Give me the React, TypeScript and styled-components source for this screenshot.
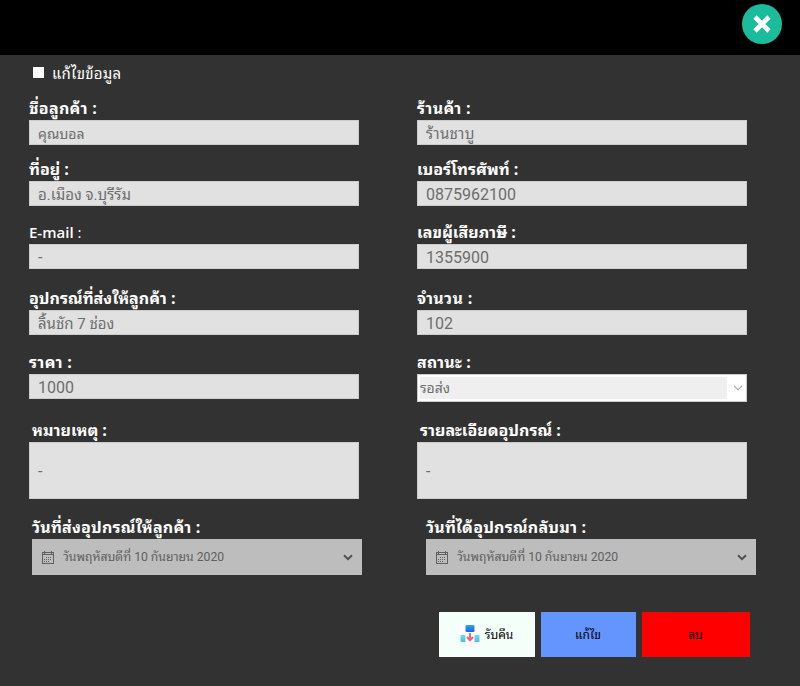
import React from "react";
import styled, { createGlobalStyle } from "styled-components";

const thai = '"Noto Sans Thai Looped", "Leelawadee UI", "Loma", "Waree", "Garuda", "Umpush", sans-serif';
const bodyFont = `Roboto, ${thai}`;
const labelFont = `"Open Sans", ${thai}`;

const GlobalStyle = createGlobalStyle`
  *, *::before, *::after { box-sizing: border-box; }
  body { margin: 0; background: #323232; font-family: ${bodyFont}; }
`;

const Window = styled.div`
  width: 800px;
  height: 686px;
  overflow: hidden;
  background: #323232;
`;

const TitleBar = styled.header`
  display: flex;
  justify-content: flex-end;
  height: 55px;
  padding: 4px 18px 0 0;
  background: #000;
`;

const CloseButton = styled.button`
  width: 40px;
  height: 40px;
  padding: 0;
  border: 0;
  border-radius: 50%;
  background: #1abc9c;
  svg { display: block; }
`;

const EditToggle = styled.label`
  display: flex;
  align-items: center;
  height: 36px;
  padding-left: 33px;
  gap: 8px;
  color: #fff;
  font-size: 15px;
  letter-spacing: 0.25px;
  line-height: 22px;
`;

const CheckBox = styled.span`
  width: 11px;
  height: 11px;
  margin-top: -1px;
  background: #fff;
`;

const ToggleText = styled.span`
  padding-top: 2px;
`;

const Form = styled.main`
  padding: 7px 0 0 29px;
`;

const Row = styled.div<{ $gap: number }>`
  display: grid;
  grid-template-columns: 330px 330px;
  column-gap: 58px;
  align-items: start;
  margin-bottom: ${(p) => p.$gap}px;
`;

const Field = styled.div<{ $shift?: number }>`
  margin-left: ${(p) => p.$shift ?? 0}px;
  margin-right: -${(p) => p.$shift ?? 0}px;
`;

const Label = styled.div<{ $indent?: number; $track?: number; $latin?: boolean }>`
  height: 22px;
  padding-left: ${(p) => p.$indent ?? 0}px;
  color: #fff;
  font-family: ${labelFont};
  font-size: ${(p) => (p.$latin ? 15 : 16)}px;
  font-weight: ${(p) => (p.$latin ? 600 : 700)};
  letter-spacing: ${(p) => p.$track ?? 0}px;
  line-height: 20px;
  white-space: nowrap;
`;

const LightColon = styled.span`
  font-weight: 400;
`;

const Input = styled.div<{ $height?: number; $size?: number; $track?: number }>`
  display: flex;
  align-items: center;
  height: ${(p) => p.$height ?? 25}px;
  padding: 2px 0 0 8px;
  border: 1px solid #ccc;
  background: #e1e1e1;
  color: #6d6d6d;
  font-size: ${(p) => p.$size ?? 16}px;
  letter-spacing: ${(p) => p.$track ?? 0}px;
  line-height: 20px;
  white-space: nowrap;
`;

const Select = styled.div`
  display: flex;
  align-items: center;
  height: 28px;
  padding: 2px 3px 2px 2px;
  border: 1px solid #ccc;
  background: #fff;
`;

const SelectValue = styled.div`
  width: 307px;
  height: 22px;
  margin-right: 6px;
  background: #efefef;
  color: #6d6d6d;
  font-size: 14px;
  line-height: 22px;
`;

const DatePicker = styled.div`
  display: flex;
  align-items: center;
  height: 36px;
  padding: 0 8px 0 10px;
  background: #bdbdbd;
  color: #606060;
  font-size: 12.2px;
  line-height: 20px;
`;

const DateText = styled.span`
  flex: 1;
  margin-left: 9px;
  white-space: nowrap;
`;

const Actions = styled.div`
  display: flex;
  gap: 6px;
  padding: 37px 0 0 410px;
`;

const ActionButton = styled.button<{ $bg: string; $width: number }>`
  display: flex;
  align-items: center;
  justify-content: center;
  gap: 5px;
  width: ${(p) => p.$width}px;
  height: 45px;
  padding: 0 1px 2px 0;
  border: 0;
  background: ${(p) => p.$bg};
  color: #000;
  font-family: ${bodyFont};
  font-size: 12px;
`;

const CalendarIcon = () => (
  <svg width="12" height="13" viewBox="0 0 12 13" shapeRendering="crispEdges" fill="#606060">
    <path d="M0 1H12V13H0ZM1 4V12H11V4ZM1 2V3H11V2Z" fillRule="evenodd" />
    <path d="M2 0H3V3H2ZM9 0H10V3H9ZM4 6H5V7H4ZM6 6H7V7H6ZM8 6H9V7H8ZM2 8H3V9H2ZM4 8H5V9H4ZM6 8H7V9H6ZM8 8H9V9H8ZM2 10H3V11H2ZM4 10H5V11H4ZM6 10H7V11H6Z" />
  </svg>
);

const ReturnIcon = () => (
  <svg width="20" height="19" viewBox="0 0 20 19">
    <defs>
      <linearGradient id="box" x1="0" y1="0" x2="0" y2="1">
        <stop stopColor="#27a6f5" />
        <stop offset="1" stopColor="#1c61dc" />
      </linearGradient>
      <linearGradient id="tray" x1="0" y1="0" x2="0" y2="1">
        <stop stopColor="#6ae0f3" />
        <stop offset="1" stopColor="#4bbde0" />
      </linearGradient>
    </defs>
    <rect width="20" height="19" fill="#fff" />
    <rect x="5.5" y="1" width="9" height="7" rx="1.3" fill="url(#box)" />
    <rect x="0.5" y="11" width="5" height="7" rx="0.8" fill="url(#tray)" />
    <rect x="14.5" y="11" width="5" height="7" rx="0.8" fill="url(#tray)" />
    <path d="M10 9V16M6.9 13L10 16.2L13.1 13" fill="none" stroke="#fb6070" strokeWidth="2" />
  </svg>
);

const DateField = () => (
  <DatePicker>
    <CalendarIcon />
    <DateText>วันพฤหัสบดีที่ 10 กันยายน 2020</DateText>
    <svg width="12" height="8" viewBox="0 0 12 8">
      <path d="M2 2.2L6 6.2L10 2.2" fill="none" stroke="#505050" strokeWidth="2" />
    </svg>
  </DatePicker>
);

export default function App() {
  return (
    <Window>
      <GlobalStyle />
      <TitleBar>
        <CloseButton aria-label="Close">
          <svg width="40" height="40" viewBox="0 0 40 40">
            <path d="M13 13L27 27M27 13L13 27" stroke="#fff" strokeWidth="4.6" />
          </svg>
        </CloseButton>
      </TitleBar>
      <EditToggle><CheckBox /><ToggleText>แก้ไขข้อมูล</ToggleText></EditToggle>
      <Form>
        <Row $gap={14}>
          <Field><Label $track={0.3}>ชื่อลูกค้า :</Label><Input $size={14}>คุณบอล</Input></Field>
          <Field><Label $track={0.3}>ร้านค้า :</Label><Input $size={15} $track={0.25}>ร้านชาบู</Input></Field>
        </Row>
        <Row $gap={16}>
          <Field><Label>ที่อยู่ :</Label><Input $size={15}>อ.เมือง จ.บุรีรัม</Input></Field>
          <Field><Label>เบอร์โทรศัพท์ :</Label><Input>0875962100</Input></Field>
        </Row>
        <Row $gap={19}>
          <Field><Label $latin>E-mail <LightColon>:</LightColon></Label><Input>-</Input></Field>
          <Field><Label>เลขผู้เสียภาษี :</Label><Input>1355900</Input></Field>
        </Row>
        <Row $gap={17}>
          <Field><Label>อุปกรณ์ที่ส่งให้ลูกค้า :</Label><Input $size={15}>ลิ้นชัก 7 ช่อง</Input></Field>
          <Field><Label $track={0.3}>จำนวน :</Label><Input>102</Input></Field>
        </Row>
        <Row $gap={18}>
          <Field><Label $track={0.3}>ราคา :</Label><Input>1000</Input></Field>
          <Field>
            <Label $track={0.2}>สถานะ :</Label>
            <Select>
              <SelectValue>รอส่ง</SelectValue>
              <svg width="10" height="6" viewBox="0 0 10 6">
                <path d="M1 0.8L5 4.8L9 0.8" fill="none" stroke="#a5a5a5" strokeWidth="1.1" />
              </svg>
            </Select>
          </Field>
        </Row>
        <Row $gap={18}>
          <Field><Label $indent={3}>หมายเหตุ :</Label><Input $height={57}>-</Input></Field>
          <Field><Label $indent={3}>รายละเอียดอุปกรณ์ :</Label><Input $height={57}>-</Input></Field>
        </Row>
        <Row $gap={0}>
          <Field $shift={3}><Label $track={0.2}>วันที่ส่งอุปกรณ์ให้ลูกค้า :</Label><DateField /></Field>
          <Field $shift={9}><Label $track={0.2}>วันที่ได้อุปกรณ์กลับมา :</Label><DateField /></Field>
        </Row>
        <Actions>
          <ActionButton $bg="#f5fffa" $width={96}><ReturnIcon />รับคืน</ActionButton>
          <ActionButton $bg="#6495ff" $width={95}>แก้ไข</ActionButton>
          <ActionButton $bg="#ff0000" $width={108}>ลบ</ActionButton>
        </Actions>
      </Form>
    </Window>
  );
}
